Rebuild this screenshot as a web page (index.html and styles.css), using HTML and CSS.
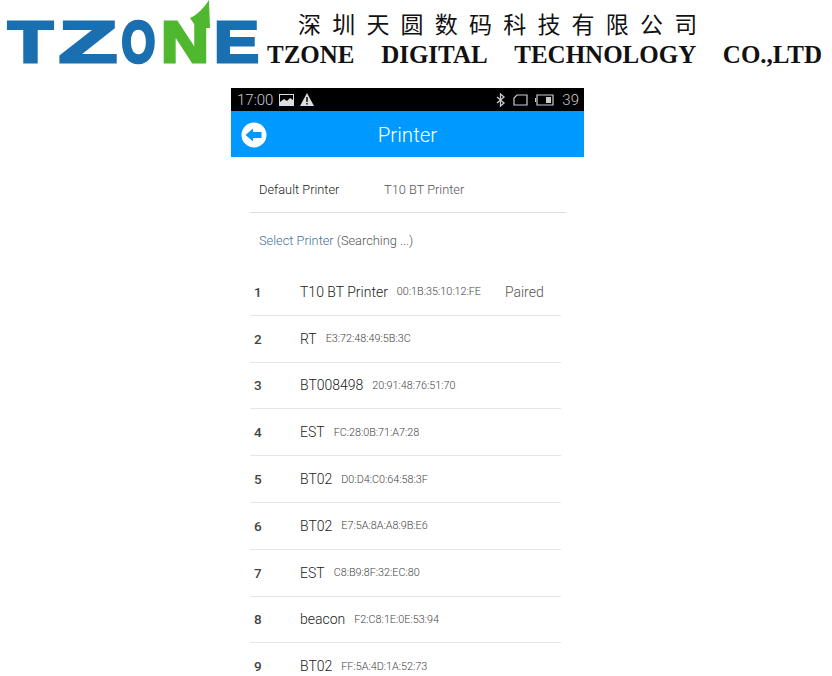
FILE: index.html
```html
<!DOCTYPE html>
<html lang="en">
<head>
    <meta charset="UTF-8">
    <meta name="viewport" content="width=device-width, initial-scale=1.0">
    <title>TZONE Printer</title>
    <link rel="stylesheet" href="styles.css">
</head>
<body>
    <header class="brand">
        <svg class="logo" width="262" height="88" viewBox="0 0 262 88">
            <g class="logo-blue">
                <text x="8" y="62" textLength="45" lengthAdjust="spacingAndGlyphs">T</text>
                <text x="59" y="62" textLength="58" lengthAdjust="spacingAndGlyphs">Z</text>
                <text class="logo-o" transform="translate(121.500 62) scale(.75 1)">O</text>
                <text x="214" y="62" textLength="45" lengthAdjust="spacingAndGlyphs">E</text>
            </g>
            <text class="logo-green" x="161" y="62" textLength="48" lengthAdjust="spacingAndGlyphs">N</text>
            <path class="logo-leaf" d="M190 18 C197 15 203 9 209 0 L210 28 L197 28 Z"/>
        </svg>
        <div class="brand-text">
            <div class="brand-cn">深圳天圆数码科技有限公司</div>
            <div class="brand-en"><span>TZONE</span><span>DIGITAL</span><span>TECHNOLOGY</span><span>CO.,LTD</span></div>
        </div>
    </header>

    <main class="phone">
        <div class="status-bar">
            <div class="status-left">
                <span>17:00</span>
                <svg width="15" height="12" viewBox="0 0 15 12"><path fill="#ddd" d="M0 0h15v12H0z"/><path fill="#000" d="M1 1h13v5l-3-2-3 3-3-2-4 3z"/></svg>
                <svg width="14" height="13" viewBox="0 0 14 13"><path fill="#ddd" d="M7 0 14 13H0z"/><path fill="#000" d="M6.300 4h1.400v5H6.300zM6.300 10h1.400v1.500H6.300z"/></svg>
            </div>
            <div class="status-right">
                <svg width="10" height="14" viewBox="0 0 10 14"><path fill="none" stroke="#ccc" stroke-width="1.300" d="M1 4l7 6-3.500 3V1L8 4 1 10"/></svg>
                <svg width="15" height="12" viewBox="0 0 15 12"><path fill="none" stroke="#ccc" stroke-width="1.200" d="M4 1h10v10H1V4z"/></svg>
                <svg width="20" height="12" viewBox="0 0 20 12"><path fill="none" stroke="#ccc" stroke-width="1.200" d="M2 1h16v10H2z"/><path fill="#ccc" d="M0 4h1v4H0zM11 3h5v6h-5z"/></svg>
                <span>39</span>
            </div>
        </div>
        <div class="app-bar">
            <svg class="back" width="26" height="26" viewBox="0 0 26 26"><circle cx="13" cy="13" r="12.500" fill="#fff"/><path fill="#0099ff" d="M4.500 13 12 6.500V10h8.500v6H12v3.500z"/></svg>
            <span>Printer</span>
        </div>

        <div class="content">
            <div class="default-row">
                <span class="default-label">Default Printer</span>
                <span class="default-value">T10 BT Printer</span>
            </div>
            <div class="select-row"><span class="select-link">Select Printer</span> (Searching ...)</div>

            <ul class="device-list">
                <li class="device"><span class="num">1</span><span class="name">T10 BT Printer</span><span class="mac">00:1B:35:10:12:FE</span><span class="paired">Paired</span></li>
                <li class="device"><span class="num">2</span><span class="name">RT</span><span class="mac">E3:72:48:49:5B:3C</span></li>
                <li class="device"><span class="num">3</span><span class="name">BT008498</span><span class="mac">20:91:48:76:51:70</span></li>
                <li class="device"><span class="num">4</span><span class="name">EST</span><span class="mac">FC:28:0B:71:A7:28</span></li>
                <li class="device"><span class="num">5</span><span class="name">BT02</span><span class="mac">D0:D4:C0:64:58:3F</span></li>
                <li class="device"><span class="num">6</span><span class="name">BT02</span><span class="mac">E7:5A:8A:A8:9B:E6</span></li>
                <li class="device"><span class="num">7</span><span class="name">EST</span><span class="mac">C8:B9:8F:32:EC:80</span></li>
                <li class="device"><span class="num">8</span><span class="name">beacon</span><span class="mac">F2:C8:1E:0E:53:94</span></li>
                <li class="device"><span class="num">9</span><span class="name">BT02</span><span class="mac">FF:5A:4D:1A:52:73</span></li>
            </ul>
        </div>
    </main>
</body>
</html>
```

FILE: styles.css
```css
html, body {
    margin: 0;
    height: 676px;
    overflow: hidden;
    background: #fff;
}
body {
    font-family: Roboto, "Liberation Sans", sans-serif;
    font-weight: 300;
    color: #333;
}

/* company header */
.brand {
    display: flex;
    height: 88px;
}
.logo {
    flex: none;
}
.logo text {
    font-family: "Liberation Sans", sans-serif;
    font-weight: 700;
    font-size: 58px;
    stroke-width: 3px;
}
.logo .logo-o {
    vector-effect: non-scaling-stroke;
}
.logo-blue {
    fill: #1a6fb0;
    stroke: #1a6fb0;
}
.logo-green {
    fill: #4fb82e;
    stroke: #4fb82e;
}
.logo-leaf {
    fill: #4fb82e;
}
.brand-text {
    margin-left: 5px;
    width: 555px;
}
.brand-cn {
    font-family: "Noto Sans CJK SC", sans-serif;
    font-weight: 400;
    font-size: 23px;
    line-height: 24px;
    letter-spacing: 11.200px;
    color: #111;
    margin: 11px 0 0 31px;
    white-space: nowrap;
}
.brand-en {
    display: flex;
    justify-content: space-between;
    font-family: "Liberation Serif", serif;
    font-weight: 700;
    font-size: 25px;
    line-height: 26px;
    color: #111;
    margin-top: 7px;
}

/* phone screenshot */
.phone {
    width: 353px;
    margin-left: 231px;
}
.status-bar {
    display: flex;
    justify-content: space-between;
    align-items: center;
    height: 23px;
    padding: 0 5px 0 6px;
    background: #000;
    color: #ccc;
    font-size: 15px;
}
.status-left, .status-right {
    display: flex;
    align-items: center;
    gap: 6px;
}
.status-right {
    gap: 7px;
}
.app-bar {
    position: relative;
    display: flex;
    justify-content: center;
    align-items: center;
    box-sizing: border-box;
    height: 46px;
    padding-top: 2px;
    background: #0099ff;
    color: #fff;
    font-size: 20.500px;
}
.back {
    position: absolute;
    left: 10px;
    top: 11px;
}
.content {
    padding: 0 18px 0 19px;
}
.default-row {
    display: flex;
    align-items: center;
    box-sizing: border-box;
    height: 56px;
    padding: 10px 0 0 9px;
    border-bottom: 1px solid #ddd;
    font-size: 12.800px;
}
.default-label {
    width: 125px;
    color: #222;
}
.default-value {
    color: #555;
}
.select-row {
    height: 56px;
    line-height: 56px;
    padding-left: 9px;
    font-size: 12.800px;
    color: #555;
}
.select-link {
    color: #3f7496;
}
.device-list {
    list-style: none;
    margin: 0 5px 0 0;
    padding: 0;
}
.device {
    display: flex;
    align-items: center;
    height: 45.800px;
    border-bottom: 1px solid #e6e6e6;
    padding-left: 4px;
}
.device:last-child {
    border-bottom: 0;
}
.num {
    width: 46px;
    font-size: 13.500px;
    font-weight: 500;
    color: #444;
}
.name {
    font-size: 14px;
    font-weight: 300;
    color: #222;
}
.mac {
    margin-left: 9px;
    font-size: 10.800px;
    color: #444;
}
.paired {
    margin-left: 24px;
    font-size: 14px;
    color: #555;
}
```
